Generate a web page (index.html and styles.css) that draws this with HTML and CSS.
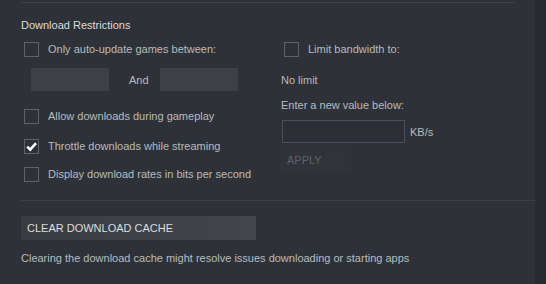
FILE: index.html
```html
<!DOCTYPE html>
<html lang="en">
<head>
<meta charset="UTF-8">
<title>Download Restrictions</title>
<link rel="stylesheet" href="styles.css">
</head>
<body>
<div class="page">
    <div class="rule rule-top"></div>

    <div class="section-title">Download Restrictions</div>

    <div class="columns">
        <div class="col col-left">
            <label class="check-row">
                <span class="box"></span>
                <span class="label">Only auto-update games between:</span>
            </label>
            <div class="time-row">
                <div class="time-input"></div>
                <span class="and">And</span>
                <div class="time-input"></div>
            </div>
            <label class="check-row row-allow">
                <span class="box"></span>
                <span class="label">Allow downloads during gameplay</span>
            </label>
            <label class="check-row row-throttle">
                <span class="box checked">
                    <svg viewBox="0 0 13 13" width="13" height="13"><path d="M2.2 6.6 L5.2 9.6 L11 3.2" fill="none" stroke="#fff" stroke-width="2.6"/></svg>
                </span>
                <span class="label">Throttle downloads while streaming</span>
            </label>
            <label class="check-row row-bits">
                <span class="box"></span>
                <span class="label">Display download rates in bits per second</span>
            </label>
        </div>

        <div class="col col-right">
            <label class="check-row">
                <span class="box"></span>
                <span class="label">Limit bandwidth to:</span>
            </label>
            <div class="plain no-limit">No limit</div>
            <div class="plain enter">Enter a new value below:</div>
            <div class="rate-row">
                <div class="rate-input"></div>
                <span class="unit">KB/s</span>
            </div>
            <div class="apply">APPLY</div>
        </div>
    </div>

    <div class="rule rule-bottom"></div>

    <div class="clear-btn">CLEAR DOWNLOAD CACHE</div>
    <div class="note">Clearing the download cache might resolve issues downloading or starting apps</div>
</div>
</body>
</html>
```

FILE: styles.css
```css
/* Steam style download settings panel */
body {
    margin: 0;
    background-color: #282a2f;
    font-family: "Liberation Sans", Arial, sans-serif;
    font-size: 11px;
    color: #b8bcbf;
}

.page {
    width: 535px;
    height: 284px;
    background-color: #2e3137;
    padding-left: 21px;
    box-sizing: border-box;
    overflow: hidden;
}

.rule {
    height: 1px;
    background-color: #3d4046;
}

.rule-top {
    margin-top: 2px;
    width: 494px;
}

.rule-bottom {
    margin-top: 18px;
}

.section-title {
    margin-top: 16px;
    height: 13px;
    line-height: 13px;
    color: #dcdedf;
}

.columns {
    display: flex;
    margin-top: 10px;
}

.col-left {
    width: 260px;
}

.col {
    display: flex;
    flex-direction: column;
}

.check-row {
    display: flex;
    align-items: center;
    height: 15px;
    padding-left: 3px;
}

.box {
    width: 13px;
    height: 13px;
    border: 1px solid #5f6266;
    display: flex;
    align-items: center;
    justify-content: center;
}

.label {
    margin-left: 9px;
    line-height: 15px;
}

.time-row {
    display: flex;
    align-items: center;
    margin-top: 11px;
    padding-left: 10px;
}

.time-input {
    width: 78px;
    height: 23px;
    background-color: #3d4047;
}

.and {
    margin: 0 11px 0 20px;
    color: #b8bcbf;
}

.row-allow {
    margin-top: 18px;
}

.row-throttle {
    margin-top: 15px;
}

.row-bits {
    margin-top: 13px;
}

.plain {
    line-height: 13px;
}

.no-limit {
    margin-top: 17px;
}

.enter {
    margin-top: 12px;
}

.rate-row {
    display: flex;
    align-items: center;
    margin-top: 8px;
    padding-left: 1px;
}

.rate-input {
    width: 121px;
    height: 21px;
    border: 1px solid #4b505c;
    background-color: #2c2f35;
}

.unit {
    margin-left: 5px;
}

.apply {
    margin-top: 5px;
    width: 70px;
    height: 25px;
    line-height: 25px;
    padding-left: 6px;
    box-sizing: border-box;
    background-color: #30333a;
    color: #5e6268;
}

.clear-btn {
    margin-top: 15px;
    width: 235px;
    height: 24px;
    line-height: 24px;
    padding-left: 6px;
    box-sizing: border-box;
    background: linear-gradient(to right, #393c43, #42454c);
    color: #dcdedf;
}

.note {
    margin-top: 12px;
    line-height: 13px;
}
```
